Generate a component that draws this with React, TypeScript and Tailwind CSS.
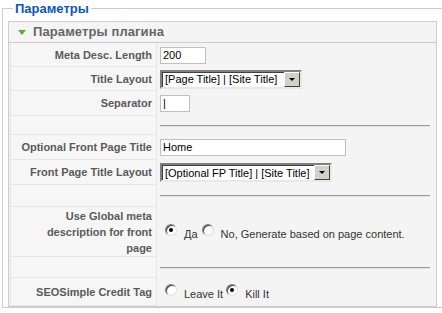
import React from 'react';

function Select({ value, width }: { value: string; width: string }) {
  return (
    <div
      className={`${width} h-[19px] flex items-stretch bg-white border-2 border-t-[#7f7f7f] border-l-[#7f7f7f] border-b-[#e8e8e8] border-r-[#e8e8e8]`}
    >
      <div className="flex-1 flex items-center pl-[2px] text-[11px] text-black leading-none whitespace-nowrap overflow-hidden border-t border-l border-[#404040]">
        {value}
      </div>
      <div className="w-[16px] bg-[#d4d0c8] flex items-center justify-center border border-t-white border-l-white border-b-[#404040] border-r-[#404040]">
        <span className="block w-0 h-0 border-l-[3px] border-r-[3px] border-t-[3px] border-l-transparent border-r-transparent border-t-black" />
      </div>
    </div>
  );
}

function Input({ value, width }: { value: string; width: string }) {
  return (
    <div className={`${width} h-[17px] bg-white border border-[#c0c0c0] flex items-center pl-[2px] text-[11px] text-black leading-none`}>
      {value}
    </div>
  );
}

function Radio({ checked, label }: { checked?: boolean; label: string }) {
  return (
    <div className="flex items-start gap-[7px]">
      <span className="w-[12px] h-[12px] rounded-full bg-white border border-t-[#808080] border-l-[#808080] border-b-[#e0e0e0] border-r-[#e0e0e0] flex items-center justify-center shadow-[inset_1px_1px_0_#404040]">
        {checked && <span className="block w-[4px] h-[4px] rounded-full bg-black" />}
      </span>
      <span className="mt-[5px] text-[11px] text-[#333] leading-none">{label}</span>
    </div>
  );
}

function Hr() {
  return <div className="w-[270px] border-t border-t-[#999] border-b border-b-[#e4e4e4]" />;
}

const rows: { label: React.ReactNode; h: string; content?: React.ReactNode }[] = [
  { label: 'Meta Desc. Length', h: 'h-[24px]', content: <Input value="200" width="w-[46px]" /> },
  { label: 'Title Layout', h: 'h-[24px]', content: <Select value="[Page Title] | [Site Title]" width="w-[142px]" /> },
  { label: 'Separator', h: 'h-[25px]', content: <Input value="|" width="w-[30px]" /> },
  { label: '', h: 'h-[19px]', content: <Hr /> },
  { label: 'Optional Front Page Title', h: 'h-[25px]', content: <Input value="Home" width="w-[186px]" /> },
  { label: 'Front Page Title Layout', h: 'h-[25px]', content: <Select value="[Optional FP Title] | [Site Title]" width="w-[172px]" /> },
  { label: '', h: 'h-[22px]', content: <Hr /> },
  {
    label: (
      <>
        Use Global meta
        <br />
        description for front
        <br />
        page
      </>
    ),
    h: 'h-[50px]',
    content: (
      <div className="flex gap-[4px] pl-[5px]">
        <Radio checked label="Да" />
        <Radio label="No, Generate based on page content." />
      </div>
    ),
  },
  { label: '', h: 'h-[21px]', content: <Hr /> },
  {
    label: 'SEOSimple Credit Tag',
    h: 'h-[28px]',
    content: (
      <div className="flex gap-[3px] pl-[5px]">
        <Radio label="Leave It" />
        <Radio checked label="Kill It" />
      </div>
    ),
  },
];

export default function App() {
  return (
    <div className="w-[442px] h-[313px] overflow-hidden bg-white pt-[1px] font-['Liberation_Sans',Arial,sans-serif]">
      <fieldset className="ml-[2px] w-[450px] border border-[#cccccc] pl-[5px] pt-[5px]">
        <legend className="ml-[5px] px-[2px] text-[13px] font-bold text-[#0b55c4] leading-[15px]">Параметры</legend>

        {/* Plugin parameters panel */}
        <div className="w-[429px] border border-[#cccccc] bg-[#f4f4f4]">
          <div className="h-[21px] flex items-center pl-[9px] gap-[7px] border-b border-[#cccccc]">
            <span className="block w-0 h-0 border-l-[4px] border-r-[4px] border-t-[5px] border-l-transparent border-r-transparent border-t-[#5ea83c]" />
            <span className="text-[13px] font-bold text-[#666] tracking-[0.1px]">Параметры плагина</span>
          </div>

          <div className="pl-[1px]">
            {rows.map((row, i) => (
              <div key={i} className={`flex ${row.h}`}>
                <div className="w-[147px] shrink-0 flex items-center justify-end pr-[4px] text-right text-[11px] font-bold text-[#5a5a5a] leading-[16px] bg-[#f6f6f6] border-b border-r border-l border-[#e6e6e6]">
                  <div>{row.label}</div>
                </div>
                <div className="flex-1 flex items-center pl-[3px]">{row.content}</div>
              </div>
            ))}
          </div>
        </div>
      </fieldset>
    </div>
  );
}
